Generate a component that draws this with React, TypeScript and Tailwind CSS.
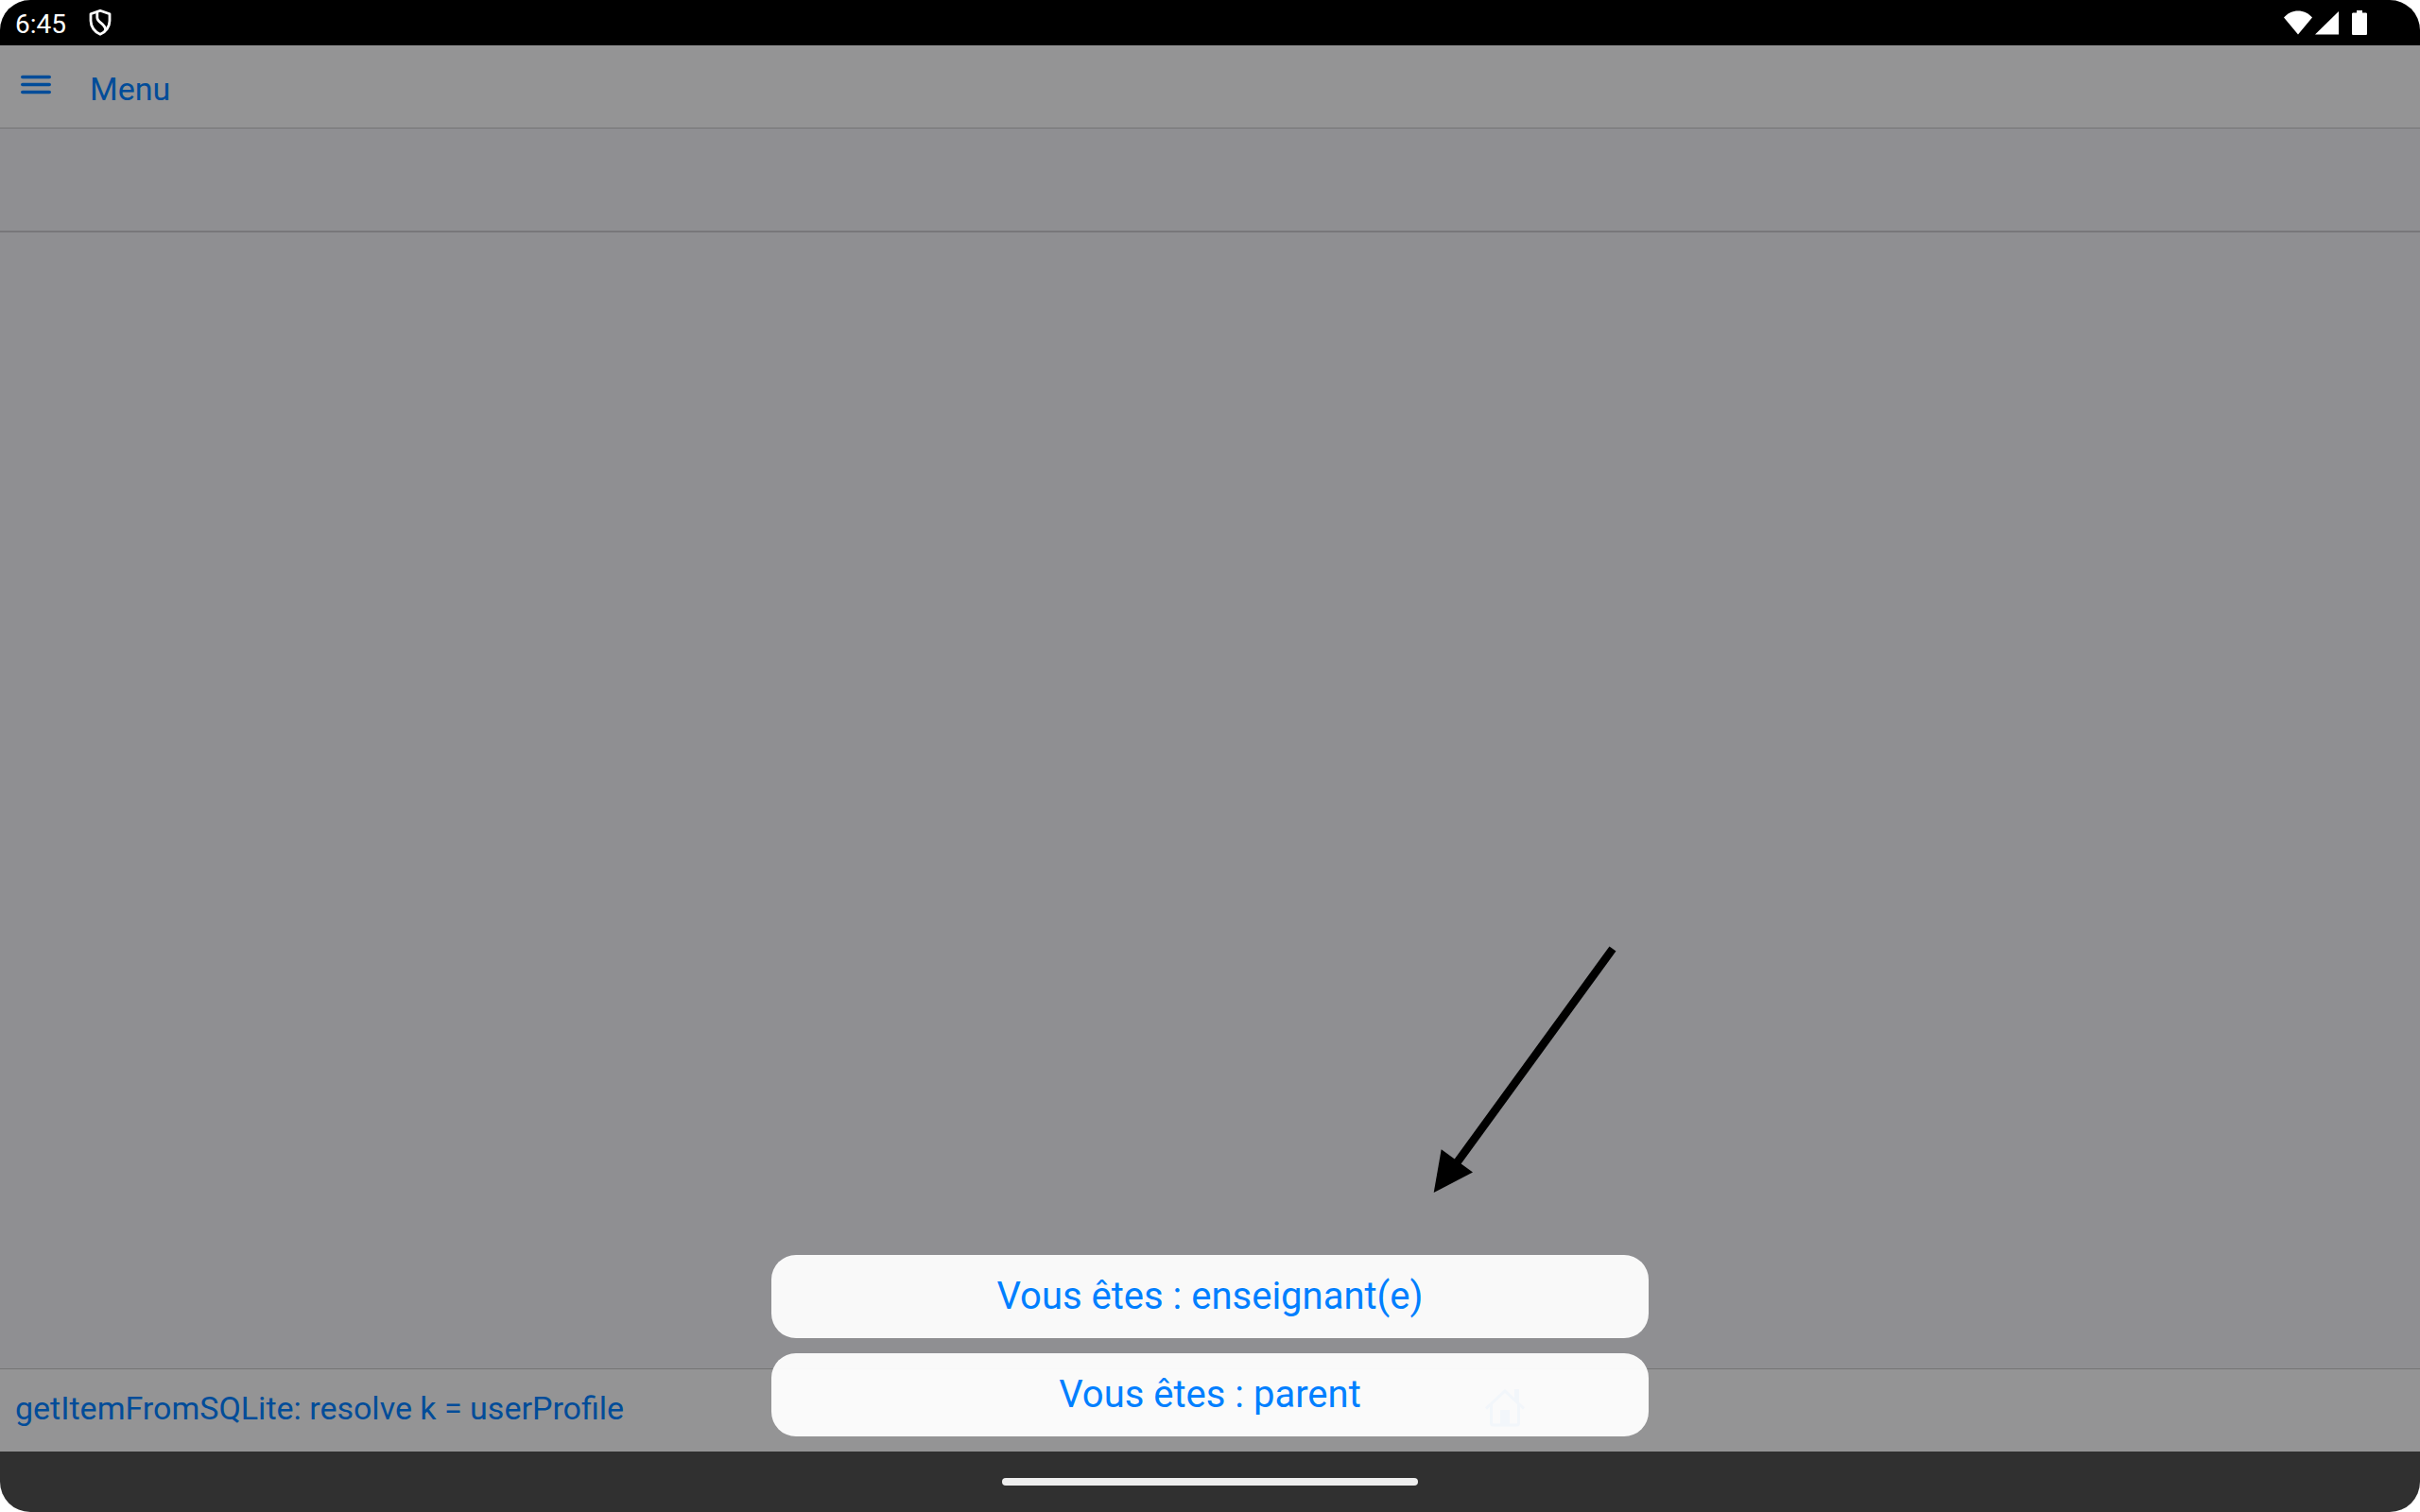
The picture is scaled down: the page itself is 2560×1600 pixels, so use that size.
import React from "react";

function StatusBar() {
  return (
    <header className="flex h-12 shrink-0 items-center justify-between bg-black pl-4 pr-14 text-white">
      <div className="flex items-center gap-6">
        <time className="pt-1 text-[28px] leading-8">6:45</time>
        <svg viewBox="0 0 24 30" className="h-[30px] w-6" fill="none" stroke="currentColor" strokeWidth="2.8" strokeLinejoin="round" aria-hidden="true">
          <path d="M12 2.200 2 5.800V13c0 6.200 4.200 12 10 14.300C17.800 25 22 19.200 22 13V5.800L12 2.200Z" />
          <path d="M8.800 3.500v6c0 5.800 9.600 6.300 8.800 13.800" />
        </svg>
      </div>
      <svg viewBox="0 0 88 26" className="h-[26px] w-[88px]" fill="currentColor" aria-hidden="true">
        <path d="M0 7.500C4 3 9.500.500 15 .500S26 3 30 7.500L15 25.500 0 7.500Z" />
        <path d="M58 1v24.500H33L58 1Z" />
        <path d="M77 0h6v2.500h3.500c1 0 1.500.500 1.500 1.500v20.500c0 1-.500 1.500-1.500 1.500h-13c-1 0-1.500-.500-1.500-1.500V4c0-1 .500-1.500 1.500-1.500H77V0Z" />
      </svg>
    </header>
  );
}

function MenuBar() {
  return (
    <nav className="flex h-[88px] shrink-0 items-center border-b border-[#c4c4c4] bg-[#f7f7f8] pl-[22px] text-[#007fff]">
      <a href="#menu" className="flex items-center gap-[41px]">
        <svg viewBox="0 0 32 30" className="h-[30px] w-8" stroke="currentColor" strokeWidth="3.6" strokeLinecap="round" aria-hidden="true">
          <path d="M1.800 4.500h28.400M1.800 12.500h28.400M1.800 20.500h28.400" />
        </svg>
        <span className="pt-1 text-[34px] leading-10">Menu</span>
      </a>
    </nav>
  );
}

function Toolbar() {
  return (
    <footer className="flex h-[88px] shrink-0 items-center justify-between border-t border-[#c4c4c4] bg-[#f7f7f8] px-4 pb-1.5 text-[#007fff]">
      <a href="#status" className="text-[34px] leading-10">getItemFromSQLite: resolve k = userProfile</a>
      <a href="#home" aria-label="Accueil">
        <svg viewBox="0 0 42 40" className="h-10 w-[42px]" fill="none" stroke="currentColor" strokeWidth="3" aria-hidden="true">
          <path d="M1 20.500 21 2l20 18.500" />
          <path d="M6.500 16v20c0 1.500.500 2 2 2h25c1.500 0 2-.500 2-2V16" />
          <path d="M31 0h5v16l-5-4.500V0ZM16 22h10v16H16V22Z" fill="currentColor" stroke="none" />
        </svg>
      </a>
      <span className="w-5" />
    </footer>
  );
}

function ActionSheet() {
  return (
    <div className="absolute inset-0 flex flex-col items-center justify-end gap-4 bg-black/40 pb-4">
      <svg viewBox="0 0 194 264" className="absolute bottom-[272px] left-1/2 ml-[236px] h-[264px] w-[194px]" aria-hidden="true">
        <path d="M190 4 24 232" stroke="#000" strokeWidth="8.6" />
        <path d="M.700 262 8.700 216.300 42 240.500Z" />
      </svg>
      {["Vous êtes : enseignant(e)", "Vous êtes : parent"].map((label) => (
        <button
          key={label}
          type="button"
          className="h-[88px] w-full max-w-[928px] rounded-[26px] bg-white/95 text-[40px] leading-[48px] text-[#007fff]"
        >
          {label}
        </button>
      ))}
    </div>
  );
}

export default function App() {
  return (
    <div className="min-h-screen bg-white font-['Roboto',sans-serif]">
      <div className="flex min-h-screen flex-col overflow-hidden rounded-[32px]">
        <StatusBar />
        <div className="relative flex flex-1 flex-col bg-[#efeff4]">
          <MenuBar />
          <div className="h-[110px] shrink-0 border-b-2 border-[#c8c7cc]" />
          <main className="flex-1" />
          <Toolbar />
          <ActionSheet />
        </div>
        <div className="flex h-16 shrink-0 items-center justify-center bg-[#303030]">
          <div className="h-2 w-[440px] rounded-full bg-[#eeeeee]" />
        </div>
      </div>
    </div>
  );
}
